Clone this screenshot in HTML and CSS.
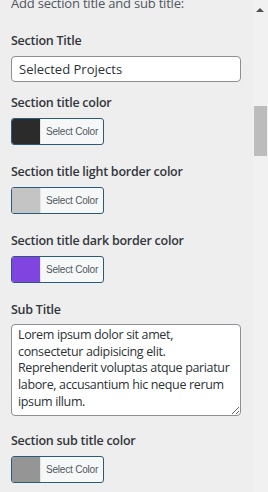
FILE: index.html
```html
<!DOCTYPE html>
<html lang="en">
<head>
  <meta charset="UTF-8" />
  <title>Customizer - Section Title</title>
  <link rel="stylesheet" href="styles.css">
</head>
<body>
  <div class="panel">
    <div class="controls">
      <p class="group-title">Add section title and sub title:</p>

      <div class="field field-text">
        <label for="title">Section Title</label>
        <input type="text" id="title" value="Selected Projects">
      </div>

      <div class="field field-color">
        <label>Section title color</label>
        <button class="color-btn"><span class="swatch swatch-dark"></span><span class="color-text">Select Color</span></button>
      </div>

      <div class="field field-color">
        <label>Section title light border color</label>
        <button class="color-btn"><span class="swatch swatch-light"></span><span class="color-text">Select Color</span></button>
      </div>

      <div class="field field-color">
        <label>Section title dark border color</label>
        <button class="color-btn"><span class="swatch swatch-purple"></span><span class="color-text">Select Color</span></button>
      </div>

      <div class="field field-area">
        <label for="subtitle">Sub Title</label>
        <textarea id="subtitle">Lorem ipsum dolor sit amet, consectetur adipisicing elit. Reprehenderit voluptas atque pariatur labore, accusantium hic neque rerum ipsum illum.</textarea>
      </div>

      <div class="field field-color">
        <label>Section sub title color</label>
        <button class="color-btn"><span class="swatch swatch-gray"></span><span class="color-text">Select Color</span></button>
      </div>
    </div>

    <div class="scrollbar">
      <span class="arrow"></span>
      <span class="thumb"></span>
    </div>
  </div>
</body>
</html>
```

FILE: styles.css
```css
body {
  margin: 0;
  background: #eeeeee;
  font-family: 'Open Sans', 'Noto Sans', sans-serif;
  color: #1d2327;
  overflow: hidden;
}
.panel {
  display: flex;
  height: 492px;
}
.controls {
  width: 241px;
  padding-left: 11px;
}
.group-title {
  margin: -7px 0 18px;
  font-size: 13px;
  line-height: 20px;
  letter-spacing: -0.2px;
  color: #50575e;
}
label {
  display: block;
  font-size: 12.5px;
  line-height: 20px;
  font-weight: 600;
  letter-spacing: -0.25px;
  color: #32373c;
  margin-bottom: 5px;
}
.field-text {
  margin-bottom: 11px;
}
.field-color {
  margin-bottom: 17px;
}
.field-area {
  margin-bottom: 15px;
}
.field-area label {
  margin-bottom: 4px;
}
input, textarea {
  box-sizing: border-box;
  width: 230px;
  border: 1px solid #8c8f94;
  border-radius: 4px;
  background: #fff;
  font-family: inherit;
  font-size: 13px;
  color: #2c3338;
  margin: 0;
}
input {
  display: block;
  height: 26px;
  padding: 0 7px;
}
textarea {
  display: block;
  height: 92px;
  padding: 2px 1px 2px 6px;
  font-size: 12.5px;
  letter-spacing: -0.35px;
  line-height: 16.7px;
  resize: vertical;
  overflow: hidden;
}
.color-btn {
  display: flex;
  box-sizing: border-box;
  width: 93px;
  height: 27px;
  padding: 0;
  border: 1px solid #2c5a7a;
  border-radius: 3px;
  background: #f6f7f7;
  overflow: hidden;
  cursor: pointer;
}
.swatch {
  width: 28px;
  height: 100%;
}
.swatch-dark { background: #2b2b2b; }
.swatch-light { background: #c4c4c4; }
.swatch-purple { background: #8045e0; }
.swatch-gray { background: #959595; }
.color-text {
  flex: 1;
  font-family: inherit;
  font-size: 10px;
  letter-spacing: -0.2px;
  line-height: 25px;
  color: #50575e;
  text-align: left;
  padding-left: 5px;
  border-left: 1px solid #e6e6e6;
}
.scrollbar {
  margin-left: 11px;
  width: 16px;
  background: #f1f1f1;
  display: flex;
  flex-direction: column;
  align-items: center;
}
.arrow {
  margin-top: 8px;
  width: 0;
  height: 0;
  border-left: 4px solid transparent;
  border-right: 4px solid transparent;
  border-bottom: 4px solid #505050;
}
.thumb {
  margin-top: 94px;
  width: 13px;
  height: 50px;
  background: #bcbcbc;
}
```
